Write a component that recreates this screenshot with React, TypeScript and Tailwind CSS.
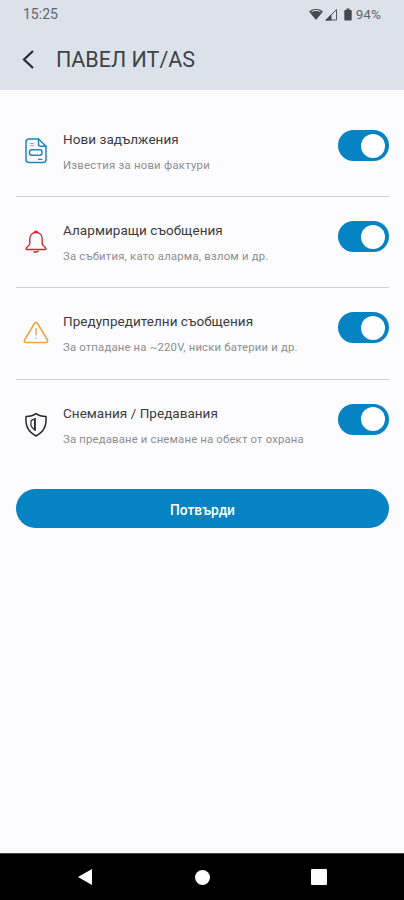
import { useState, type ReactNode } from "react";

type Setting = { title: string; note: string; titleClass: string; noteClass: string; icon: ReactNode };

const BillIcon = () => (
  <svg width="24" height="28" viewBox="0 0 24 28" fill="none" stroke="#1c86c4" strokeWidth="1.5" strokeLinecap="round" strokeLinejoin="round">
    <path d="M5 2H14.5L22 9.2V22.5a3 3 0 0 1-3 3H5a3 3 0 0 1-3-3V5a3 3 0 0 1 3-3Z" />
    <path d="M14.5 2V7.3a2 2 0 0 0 2 2H22" />
    <path d="M6 6.500h3.500M6 8.500h3.500" strokeWidth="1.1" opacity=".6" />
    <rect x="5.500" y="12.700" width="12.500" height="5.500" rx="2.200" />
    <path d="M14.500 22.300H18" strokeWidth="1.2" />
  </svg>
);

const BellIcon = () => (
  <svg width="24" height="26" viewBox="0 0 24 26" fill="none" stroke="#cf242b" strokeWidth="1.35" strokeLinecap="round" strokeLinejoin="round">
    <path d="M10.500 3.500c.1-1.700 2.900-1.700 3 0" />
    <path d="M12 3.500c-4 0-6.200 3-6.200 6.600v4.300c0 2.200-3.900 3.900-3.900 5.300 0 .5.400.8 1 .8h18.200c.6 0 1-.3 1-.8 0-1.400-3.900-3.100-3.900-5.300v-4.300C18.200 6.500 16 3.500 12 3.500Z" />
    <path d="M9.800 23h2.200c1.200 0 1.900-.3 2.200-.8" />
  </svg>
);

const WarningIcon = () => (
  <svg width="26" height="24" viewBox="0 0 26 24" fill="none" stroke="#f2a044" strokeWidth="1.6" strokeLinecap="round" strokeLinejoin="round">
    <path d="M11.400 2.500 1.600 18.800c-.8 1.400 0 2.700 1.600 2.700h19.600c1.600 0 2.400-1.300 1.600-2.700L14.600 2.500c-.8-1.300-2.400-1.300-3.200 0Z" />
    <path d="M13 7.500v6.300M13 17.300v.2" strokeWidth="1.400" />
  </svg>
);

const ShieldIcon = () => (
  <svg width="24" height="26" viewBox="0 0 24 26" fill="none" stroke="#26282b" strokeWidth="1.5" strokeLinejoin="round">
    <path d="M12 1.700c2.700 2 6 2.700 10 2.800.6 9-1.600 15-10 19.500C3.600 19.500 1.400 13.500 2 4.500c4-.1 7.300-.8 10-2.800Z" />
    <path d="M11.200 6.500v12L7 14.200V8.600l4.200-2.100Z" strokeWidth="1.200" />
    <path d="M10.600 7.500v10" strokeWidth="1.300" />
  </svg>
);

const settings: Setting[] = [
  { title: "Нови задължения", note: "Известия за нови фактури", titleClass: "tracking-[0.06px]", noteClass: "tracking-[0.26px]", icon: <BillIcon /> },
  { title: "Алармиращи съобщения", note: "За събития, като аларма, взлом и др.", titleClass: "tracking-[0.06px]", noteClass: "tracking-[0.22px]", icon: <BellIcon /> },
  { title: "Предупредителни съобщения", note: "За отпадане на ~220V, ниски батерии и др.", titleClass: "tracking-[0.04px]", noteClass: "tracking-[0.19px]", icon: <WarningIcon /> },
  { title: "Снемания / Предавания", note: "За предаване и снемане на обект от охрана", titleClass: "tracking-[0.03px]", noteClass: "tracking-[0.19px]", icon: <ShieldIcon /> },
];

function Toggle({ label }: { label: string }) {
  const [on, setOn] = useState(true);
  return (
    <button
      type="button"
      role="switch"
      aria-checked={on}
      aria-label={label}
      onClick={() => setOn(!on)}
      className={`mt-6 flex h-[31px] w-[51px] shrink-0 items-center rounded-full px-1 ${on ? "justify-end bg-[#0583c3]" : "justify-start bg-gray-300"}`}
    >
      <span className="size-6 rounded-full bg-white" />
    </button>
  );
}

function Row({ item, last }: { item: Setting; last: boolean }) {
  return (
    <div className={`flex h-[91.200px] items-start ${last ? "" : "border-b border-[#cfd1d5]"}`}>
      <div className="mt-[31px] flex h-7 w-10 shrink-0 items-center justify-center">{item.icon}</div>
      <div className="ml-[7px] min-w-0 flex-1 pt-[23px] whitespace-nowrap">
        <div className={`text-[13.5px] leading-5 text-[#3a3b3e] ${item.titleClass}`}>{item.title}</div>
        <div className={`mt-[7px] text-[11.3px] leading-5 text-[#8b8d91] ${item.noteClass}`}>{item.note}</div>
      </div>
      <Toggle label={item.title} />
    </div>
  );
}

export default function App() {
  return (
    <div className="flex h-[900px] w-[404px] flex-col overflow-hidden bg-[#fcfcfe] font-[Roboto,sans-serif]">
      <header className="h-[90px] shrink-0 bg-[#dce2ea]">
        <div className="flex h-[29px] items-center pr-[23px] pl-[23px] text-[#62666b]">
          <span className="text-[14px]">15:25</span>
          <svg className="ml-auto" width="50" height="16" viewBox="0 0 50 16">
            <path d="M1 4.500C5 1.200 11 1.200 15 4.500L8 13Z" fill="#464a4f" />
            <path d="M3.500 4.800c3-1.900 6-1.900 9 0" fill="none" stroke="#dce2ea" />
            <path d="M18 13 28.500 2.500V13Z" fill="none" stroke="#565a5f" />
            <path d="M17 13.500 23.500 7v6.500Z" fill="#464a4f" />
            <path d="M38.500 1.500h3V3h1.500q.7 0 .7.700v9.100q0 .7-.7.700h-6q-.7 0-.7-.7V3.700q0-.7.700-.7h1.500Z" fill="#464a4f" />
          </svg>
          <span className="-ml-[2px] text-[13.500px] tracking-[0.1px]">94%</span>
        </div>
        <div className="flex h-[61px] items-center pl-[21px]">
          <svg width="14" height="20" viewBox="0 0 14 20" fill="none" stroke="#292c30" strokeWidth="2.200">
            <path d="M12 1 3 9.500l9 8.500" />
          </svg>
          <h1 className="ml-[21px] text-[21.500px] leading-7 font-normal text-[#3f4247]">ПАВЕЛ ИТ/AS</h1>
        </div>
      </header>
      <main className="flex-1 pt-4 pr-[15px] pl-4">
        {settings.map((item, i) => (
          <Row key={item.title} item={item} last={i === settings.length - 1} />
        ))}
        <button type="button" className="mt-[18px] flex h-[39px] w-full items-center justify-center rounded-full bg-[#0583c3] pt-[4px] text-[13.800px] font-medium text-white">
          Потвърди
        </button>
      </main>
      <nav className="flex h-[47px] shrink-0 items-center justify-between border-t border-[#444] bg-black pr-[77px] pl-[77px]">
        <svg width="16" height="18" viewBox="0 0 16 18" fill="white"><path d="M1 9 15 1v16Z" /></svg>
        <span className="size-[15px] rounded-full bg-white" />
        <span className="size-4 rounded-[1px] bg-white" />
      </nav>
    </div>
  );
}
